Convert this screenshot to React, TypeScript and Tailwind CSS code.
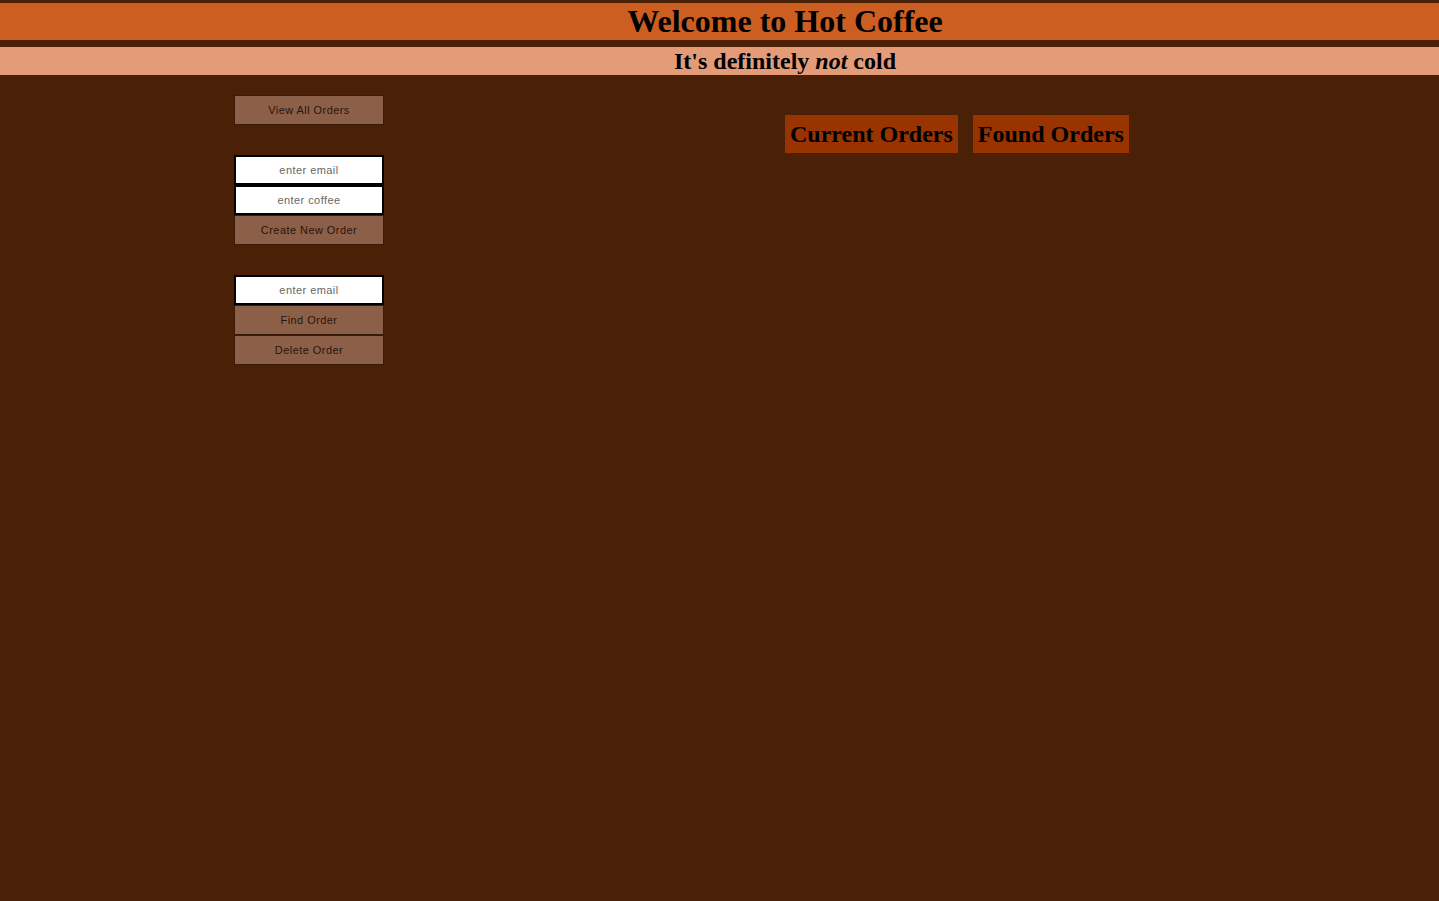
import { useState } from "react"

const btn = "w-[150px] h-[30px] bg-[#8c5f48] border border-[#3a1a08] text-[11px] text-[#2a140a] tracking-[0.04em] font-['Liberation_Sans',Arial,sans-serif] text-center"
const input = "w-[150px] h-[30px] bg-white border-2 border-black text-[11px] tracking-[0.04em] text-center text-[#555] placeholder:text-[#666] font-['Liberation_Sans',Arial,sans-serif] outline-none"

export default function App() {
    const [email, setEmail] = useState("")
    const [coffee, setCoffee] = useState("")
    const [findEmail, setFindEmail] = useState("")

    return (
        <div className="min-h-screen w-full bg-[#4a2006] pt-[3px] font-['Liberation_Serif','Times_New_Roman',serif] text-black">
            <header className="bg-[#cd5e22] h-[37px] flex items-center justify-center pl-[131px]">
                <h1 className="text-[32px] font-bold leading-none -mt-[2px]">Welcome to Hot Coffee</h1>
            </header>
            <div className="mt-[7px] bg-[#e49b77] h-[28px] flex items-center justify-center pl-[131px]">
                <h2 className="text-[24px] font-bold leading-none">It's definitely <em>not</em> cold</h2>
            </div>
            <main className="flex pt-[20px]">
                <div className="ml-[234px] flex flex-col">
                    <button className={btn}>View All Orders</button>
                    <div className="mt-[30px] flex flex-col">
                        <input className={input} placeholder="enter email" value={email} onChange={e => setEmail(e.target.value)} />
                        <input className={input} placeholder="enter coffee" value={coffee} onChange={e => setCoffee(e.target.value)} />
                        <button className={btn}>Create New Order</button>
                    </div>
                    <div className="mt-[30px] flex flex-col">
                        <input className={input} placeholder="enter email" value={findEmail} onChange={e => setFindEmail(e.target.value)} />
                        <button className={btn}>Find Order</button>
                        <button className={btn}>Delete Order</button>
                    </div>
                </div>
                <div className="ml-[401px] mt-[20px] flex gap-[15px] items-start">
                    <h3 className="bg-[#993300] h-[38px] px-[5px] flex items-center text-[24px] font-bold leading-none">Current Orders</h3>
                    <h3 className="bg-[#993300] h-[38px] px-[5px] flex items-center text-[24px] font-bold leading-none">Found Orders</h3>
                </div>
            </main>
        </div>
    )
}
